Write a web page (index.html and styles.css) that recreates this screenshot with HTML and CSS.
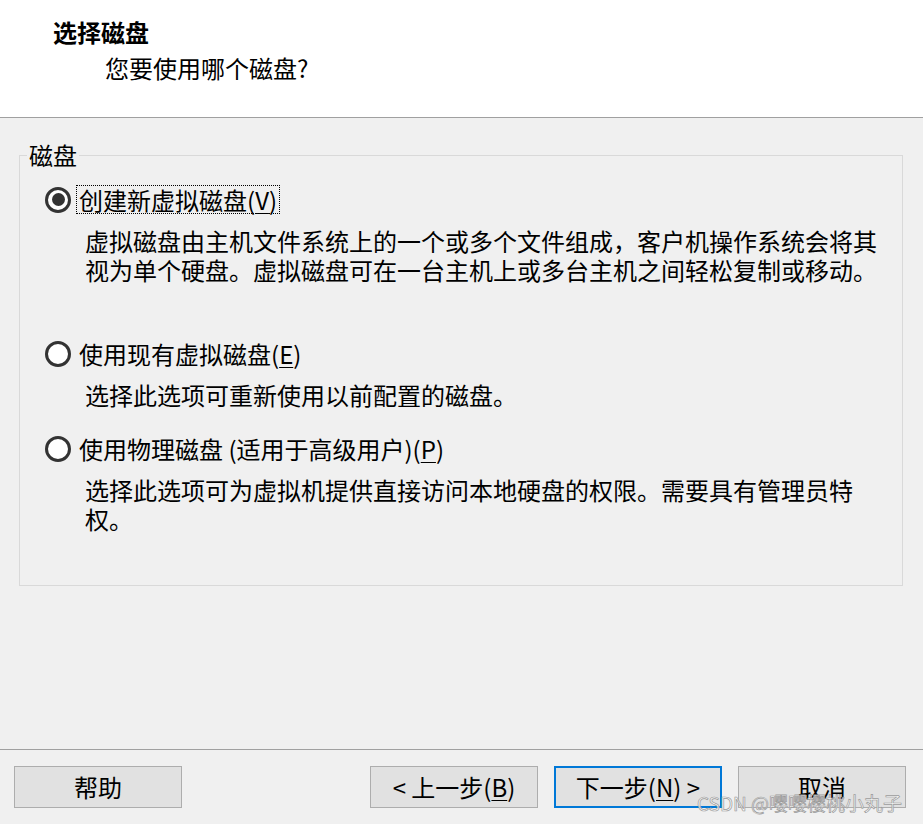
FILE: index.html
```html
<!DOCTYPE html>
<html lang="zh-CN">
<head>
<meta charset="utf-8">
<title>选择磁盘</title>
<link rel="stylesheet" href="styles.css">
</head>
<body>
<div class="window">
  <header class="header">
    <div class="title">选择磁盘</div>
    <div class="subtitle">您要使用哪个磁盘?</div>
  </header>
  <main class="main">
    <fieldset class="group">
      <legend class="legend">磁盘</legend>
      <div class="option opt-first">
        <div class="radio-line">
          <span class="radio checked"></span>
          <span class="label focused">创建新虚拟磁盘(<u>V</u>)</span>
        </div>
        <div class="desc">虚拟磁盘由主机文件系统上的一个或多个文件组成，客户机操作系统会将其<br>视为单个硬盘。虚拟磁盘可在一台主机上或多台主机之间轻松复制或移动。</div>
      </div>
      <div class="option opt-second">
        <div class="radio-line">
          <span class="radio"></span>
          <span class="label">使用现有虚拟磁盘(<u>E</u>)</span>
        </div>
        <div class="desc">选择此选项可重新使用以前配置的磁盘。</div>
      </div>
      <div class="option opt-third">
        <div class="radio-line">
          <span class="radio"></span>
          <span class="label">使用物理磁盘 (适用于高级用户)(<u>P</u>)</span>
        </div>
        <div class="desc">选择此选项可为虚拟机提供直接访问本地硬盘的权限。需要具有管理员特<br>权。</div>
      </div>
    </fieldset>
  </main>
  <footer class="footer">
    <button class="btn">帮助</button>
    <div class="spacer"></div>
    <button class="btn">&lt; 上一步(<u>B</u>)</button>
    <button class="btn primary">下一步(<u>N</u>) &gt;</button>
    <button class="btn">取消</button>
    <div class="watermark">CSDN @嘤嘤樱桃小丸子</div>
  </footer>
</div>
</body>
</html>
```
FILE: styles.css
```css
* { box-sizing: border-box; }
html, body {
  margin: 0;
  padding: 0;
}
body {
  background: #f0f0f0;
  font-family: "Noto Sans CJK SC", "Noto Sans", sans-serif;
  color: #000;
  font-size: 24px;
}
.window {
  width: 923px;
  height: 824px;
  display: flex;
  flex-direction: column;
  overflow: hidden;
  position: relative;
}
.header {
  background: #fff;
  height: 118px;
  border-bottom: 1px solid #a0a0a0;
  padding: 17px 0 0 53px;
  flex: none;
}
.title {
  font-weight: bold;
  line-height: 29px;
}
.subtitle {
  line-height: 29px;
  margin-top: 7px;
  padding-left: 52px;
}
.main {
  flex: 1;
  padding: 23px 20px 0 19px;
}
.group {
  margin: 0;
  padding: 0;
  border: 1px solid #d9d9d9;
  height: 445px;
  min-width: 0;
}
.legend {
  margin-left: 7px;
  padding: 0 2px;
  line-height: 28px;
  color: #000;
}
.option {
  padding-left: 25px;
}
.opt-first { margin-top: 16px; }
.opt-second { margin-top: 55px; }
.opt-third { margin-top: 25px; }
.radio-line {
  display: flex;
  align-items: center;
  height: 29px;
}
.radio {
  width: 26px;
  height: 26px;
  border: 3px solid #333;
  border-radius: 50%;
  background: #fff;
  display: flex;
  align-items: center;
  justify-content: center;
  flex: none;
}
.radio.checked::after {
  content: "";
  width: 13px;
  height: 13px;
  border-radius: 50%;
  background: #333;
}
.label {
  margin-left: 5px;
  padding: 0 2px;
  line-height: 27px;
  border: 1px dotted transparent;
  white-space: nowrap;
}
.label.focused {
  border-color: #000;
}
u { text-decoration-thickness: 1px; text-underline-offset: 3px; }
.desc {
  margin-top: 12px;
  padding-left: 40px;
  line-height: 29px;
  white-space: nowrap;
}
.footer {
  flex: none;
  height: 75px;
  border-top: 1px solid #a0a0a0;
  display: flex;
  gap: 16px;
  padding: 16px 17px 0 14px;
  position: relative;
}
.spacer { flex: 1; }
.btn {
  width: 168px;
  height: 42px;
  background: #e1e1e1;
  border: 1px solid #adadad;
  font-family: inherit;
  font-size: 24px;
  color: #000;
  padding: 0;
  line-height: 1;
  flex: none;
}
.btn.primary {
  border: 2px solid #0078d7;
}
.watermark {
  position: absolute;
  left: 697px;
  top: 41px;
  font-size: 19px;
  line-height: 24px;
  color: rgba(255, 255, 255, 0.8);
  -webkit-text-stroke: 0.7px #9a9a9a;
  white-space: nowrap;
}
```
